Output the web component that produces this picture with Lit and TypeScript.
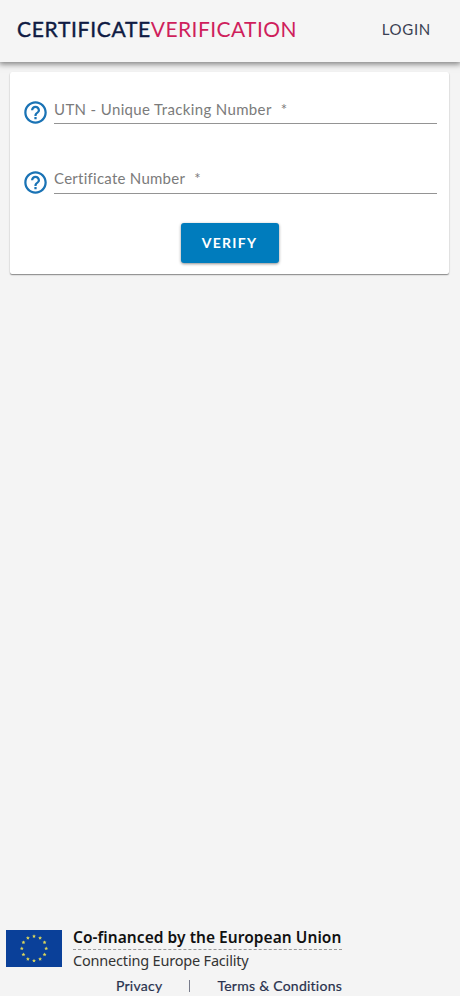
import { LitElement, html, css, svg } from "lit";
import { customElement, property } from "lit/decorators.js";

@customElement("help-field")
class HelpField extends LitElement {
  @property() label = "";
  static styles = css`
    :host { display: flex; height: 23px; }
    .icon { flex: none; width: 27px; height: 27px; margin: -1px 5.5px 0 -1.5px; display: block; }
    .line { flex: 1; height: 23px; border-bottom: 1px solid #949494; color: #7b7b7b; white-space: pre; font-size: 15px; line-height: var(--label-line, 18px); }
    .text { letter-spacing: var(--field-spacing, 0.36px); }
    .star { margin-left: 9px; }
  `;
  render() {
    return html`
      <svg class="icon" viewBox="0 0 24 24" fill="#1a73b5">
        <path d="M11 18h2v-2h-2v2zm1-16C6.48 2 2 6.48 2 12s4.48 10 10 10 10-4.48 10-10S17.52 2 12 2zm0 18c-4.41 0-8-3.59-8-8s3.59-8 8-8 8 3.59 8 8-3.59 8-8 8zm0-14c-2.21 0-4 1.79-4 4h2c0-1.1.9-2 2-2s2 .9 2 2c0 2-3 1.75-3 5h2c0-2.25 3-2.5 3-5 0-2.21-1.79-4-4-4z" />
      </svg>
      <div class="line"><span class="text">${this.label}</span><span class="star">*</span></div>
    `;
  }
}

@customElement("eu-flag")
class EuFlag extends LitElement {
  static styles = css`
    :host { display: block; width: 56px; height: 37px; }
    .flag { display: block; }
  `;
  render() {
    const stars = Array.from({ length: 12 }, (_, i) => {
      const c = (i * Math.PI) / 6;
      const cx = 28 + 12.2 * Math.sin(c);
      const cy = 18.5 - 12.2 * Math.cos(c);
      const points = Array.from({ length: 10 }, (_, k) => {
        const r = k % 2 ? 1 : 2;
        const a = (k * Math.PI) / 5;
        return `${(cx + r * Math.sin(a)).toFixed(2)},${(cy - r * Math.cos(a)).toFixed(2)}`;
      }).join(" ");
      return svg`<polygon points=${points} fill="#d9d45c" />`;
    });
    return html`<svg class="flag" width="56" height="37" viewBox="0 0 56 37"><rect width="56" height="37" fill="#0a4099" />${stars}</svg>`;
  }
}

@customElement("app-root")
class AppRoot extends LitElement {
  static styles = css`
    * { box-sizing: border-box; }
    :host { display: flex; flex-direction: column; height: 996px; background: #f4f4f4; font-family: Lato, "Liberation Sans", sans-serif; overflow: hidden; }
    .bar { flex: none; height: 62px; padding: 0 29px 5px 17px; display: flex; align-items: center; justify-content: space-between; background: #f5f5f5; box-shadow: 0 1px 6px 1px rgba(0, 0, 0, 0.5); white-space: nowrap; }
    .title { font-size: 21px; line-height: 26px; color: #0f1b43; }
    .first { -webkit-text-stroke: 0.4px #0f1b43; letter-spacing: 0.7px; }
    .second { color: #cf1f5c; letter-spacing: 0.42px; }
    .login { font-size: 15px; line-height: 20px; color: #3a3f52; letter-spacing: 0.7px; }
    .card { flex: none; margin: 10px 11px 0 10px; height: 202px; padding: 28px 12px 0 13px; background: #fff; border-radius: 2px; box-shadow: 0 1px 1px rgba(0, 0, 0, 0.35), 0 1px 2px rgba(0, 0, 0, 0.15); }
    .certificate { margin-top: 47px; --field-spacing: 0.26px; --label-line: 16px; }
    .verify { display: block; width: 98px; height: 40px; margin: 30px auto 0 157.5px; padding: 0; border: 0; border-radius: 3px; background: #007cbd; color: #fff; font: 700 14px/38px Lato, sans-serif; letter-spacing: 1.3px; box-shadow: 0 1px 3px rgba(0, 0, 0, 0.45); }
    .footer { margin-top: auto; flex: none; height: 70px; }
    .funding { display: flex; height: 47px; padding-left: 6px; white-space: nowrap; font-family: "Noto Sans", sans-serif; }
    .flag { margin: 4px 11px 0 0; }
    .headline { width: 269px; height: 24px; border-bottom: 1px dashed #999; color: #111; font-size: 15.5px; font-weight: 600; line-height: 22px; letter-spacing: 0.05px; }
    .programme { color: #333; font-size: 14.5px; line-height: 20px; letter-spacing: -0.19px; }
    .links { display: flex; padding-left: 116px; height: 22px; color: #28314d; font-size: 14px; line-height: 26px; white-space: nowrap; -webkit-text-stroke: 0.2px; letter-spacing: 0.25px; }
    .divider { margin: 7px 27px 0 27px; width: 1px; height: 12px; background: #777b8a; }
  `;
  render() {
    return html`
      <header class="bar">
        <div class="title"><span class="first">CERTIFICATE</span><span class="second">VERIFICATION</span></div>
        <div class="login">LOGIN</div>
      </header>
      <main class="card">
        <help-field label="UTN - Unique Tracking Number"></help-field>
        <help-field class="certificate" label="Certificate Number"></help-field>
        <button class="verify">VERIFY</button>
      </main>
      <footer class="footer">
        <div class="funding">
          <eu-flag class="flag"></eu-flag>
          <div>
            <div class="headline"><span>Co-financed by the European Union</span></div>
            <div class="programme"><span>Connecting Europe Facility</span></div>
          </div>
        </div>
        <nav class="links"><span class="privacy">Privacy</span><span class="divider"></span><span class="terms">Terms &amp; Conditions</span></nav>
      </footer>
    `;
  }
}
